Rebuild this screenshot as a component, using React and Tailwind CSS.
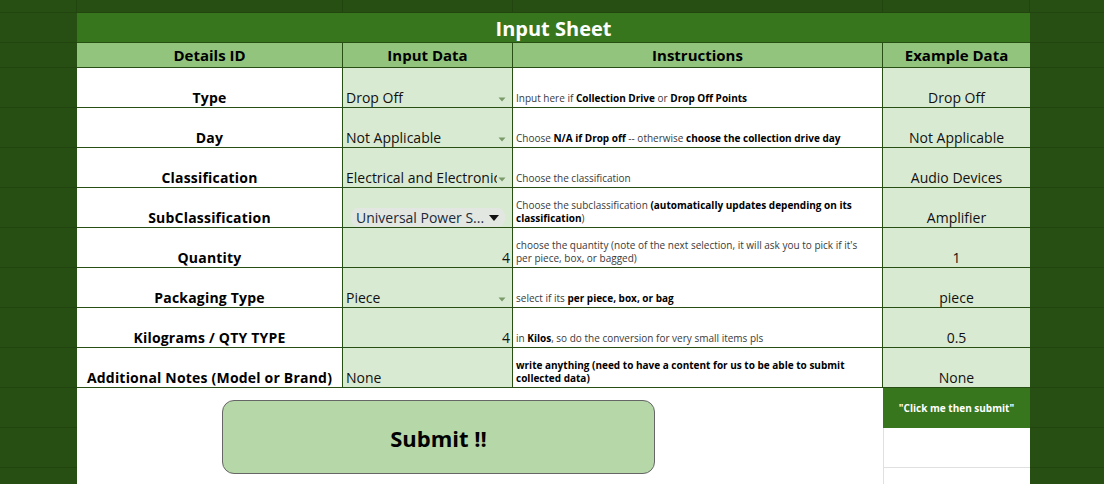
import React from 'react'

const rows = [
  {
    id: 'Type',
    input: 'Drop Off',
    arrow: true,
    example: 'Drop Off',
    note: (
      <>
        Input here if <b>Collection Drive</b> or <b>Drop Off Points</b>
      </>
    ),
  },
  {
    id: 'Day',
    input: 'Not Applicable',
    arrow: true,
    example: 'Not Applicable',
    note: (
      <>
        Choose <b>N/A if Drop off</b> -- otherwise <b>choose the collection drive day</b>
      </>
    ),
  },
  {
    id: 'Classification',
    input: 'Electrical and Electronics',
    arrow: true,
    example: 'Audio Devices',
    note: <>Choose the classification</>,
  },
  {
    id: 'SubClassification',
    chip: 'Universal Power S...',
    example: 'Amplifier',
    note: (
      <>
        Choose the subclassification <b>(automatically updates depending on its classification</b>)
      </>
    ),
  },
  {
    id: 'Quantity',
    number: '4',
    example: '1',
    note: (
      <>
        choose the quantity (note of the next selection, it will ask you to pick if it's per piece, box, or bagged)
      </>
    ),
  },
  {
    id: 'Packaging Type',
    input: 'Piece',
    arrow: true,
    example: 'piece',
    note: (
      <>
        select if its <b>per piece, box, or bag</b>
      </>
    ),
  },
  {
    id: 'Kilograms / QTY TYPE',
    number: '4',
    example: '0.5',
    note: (
      <>
        in <b>Kilos</b>, so do the conversion for very small items pls
      </>
    ),
  },
  {
    id: 'Additional Notes (Model or Brand)',
    input: 'None',
    example: 'None',
    note: <b>write anything (need to have a content for us to be able to submit collected data)</b>,
  },
]

function Arrow() {
  return (
    <svg width="8" height="5" viewBox="0 0 8 5" className="shrink-0">
      <path d="M0.5 0.5 L7.5 0.5 L4 4.5 Z" fill="#7a9a6a" />
    </svg>
  )
}

function Margin({ right }) {
  return (
    <div
      className={
        (right ? 'w-[74px]' : 'w-[77px]') +
        ' shrink-0 h-full border-b border-[#22450f]'
      }
    />
  )
}

function DataRow({ row }) {
  return (
    <div className="flex h-[40px]">
      <Margin />
      <div className="w-[266px] h-full bg-white border-b border-r border-[#274e13] flex items-end justify-center pb-0 text-[14px] font-bold text-black leading-[18px] tracking-[0.2px]">
        {row.id}
      </div>
      <div className="w-[170px] h-full bg-[#d9ead3] border-b border-r border-[#274e13] flex items-end pb-0 text-[14px] text-[#111] leading-[18px]">
        {row.chip ? (
          <div className="ml-[8px] w-[154px] h-[19px] rounded-[8px] bg-[#e3e7e1] flex items-center justify-between pl-[5px] pr-[6px] text-[#1a2a3a]">
            <span className="whitespace-nowrap">{row.chip}</span>
            <svg width="10" height="6" viewBox="0 0 10 6">
              <path d="M0 0 L10 0 L5 6 Z" fill="#111" />
            </svg>
          </div>
        ) : row.number ? (
          <div className="w-full text-right pr-[2px]">{row.number}</div>
        ) : (
          <div className="w-full flex items-center pl-[3px] pr-[6px]">
            <span className="whitespace-nowrap overflow-hidden w-[151px] shrink-0">{row.input}</span>
            {row.arrow && (
              <span className="ml-auto mb-[-2px]">
                <Arrow />
              </span>
            )}
          </div>
        )}
      </div>
      <div className="w-[370px] h-full bg-white border-b border-r border-[#274e13] flex items-end pb-[2px] pl-[3px] pr-[14px] text-[10px] leading-[13px] text-[#3a3a3a] [&_b]:text-black">
        <div>{row.note}</div>
      </div>
      <div className="w-[147px] h-full bg-[#d9ead3] border-b border-[#274e13] flex items-end justify-center pb-0 text-[14px] text-[#111] leading-[18px]">
        {row.example}
      </div>
      <Margin right />
    </div>
  )
}

export default function App() {
  return (
    <div className="w-[1104px] h-[484px] overflow-hidden bg-[#274e13] font-['Open_Sans','Liberation_Sans',sans-serif]">
      {/* top strip */}
      <div className="flex h-[13px]">
        <div className="w-[77px] h-full border-b border-r border-[#22450f]" />
        <div className="w-[266px] h-full border-b border-r border-[#22450f]" />
        <div className="w-[170px] h-full border-b border-r border-[#22450f]" />
        <div className="w-[370px] h-full border-b border-r border-[#22450f]" />
        <div className="w-[147px] h-full border-b border-r border-[#22450f]" />
        <div className="w-[74px] h-full border-b border-[#22450f]" />
      </div>

      {/* title */}
      <div className="flex h-[30px]">
        <Margin />
        <div className="w-[953px] h-full bg-[#38761d] border-b border-[#274e13] flex items-center justify-center pt-[2px] text-white font-bold text-[20px]">
          Input Sheet
        </div>
        <Margin right />
      </div>

      {/* header */}
      <div className="flex h-[25px]">
        <Margin />
        <div className="w-[266px] h-full bg-[#93c47d] border-b border-r border-[#274e13] flex items-center justify-center font-bold text-[15px] text-black">
          Details ID
        </div>
        <div className="w-[170px] h-full bg-[#93c47d] border-b border-r border-[#274e13] flex items-center justify-center font-bold text-[15px] text-black">
          Input Data
        </div>
        <div className="w-[370px] h-full bg-[#93c47d] border-b border-r border-[#274e13] flex items-center justify-center font-bold text-[15px] text-black">
          Instructions
        </div>
        <div className="w-[147px] h-full bg-[#93c47d] border-b border-[#274e13] flex items-center justify-center font-bold text-[15px] text-black">
          Example Data
        </div>
        <Margin right />
      </div>

      {rows.map((row) => (
        <DataRow key={row.id} row={row} />
      ))}

      {/* bottom */}
      <div className="flex h-[96px]">
        <div className="w-[77px] shrink-0 flex flex-col">
          <div className="h-[40px] border-b border-[#22450f]" />
          <div className="h-[40px] border-b border-[#22450f]" />
        </div>
        <div className="w-[806px] h-full bg-white pt-[12px] pl-[145px]">
          <button className="w-[433px] h-[74px] rounded-[12px] border border-[#666] bg-[#b6d7a8] flex items-center justify-center pt-[2px] font-bold text-[22px] text-black">
            Submit !!
          </button>
        </div>
        <div className="w-[147px] h-full flex flex-col">
          <div className="h-[40px] bg-[#38761d] flex items-center justify-center text-white font-bold text-[10px]">
            "Click me then submit"
          </div>
          <div className="h-[40px] bg-white border-b border-l border-[#e0e0e0]" />
          <div className="h-[16px] bg-white border-l border-[#e0e0e0]" />
        </div>
        <div className="w-[74px] shrink-0 flex flex-col">
          <div className="h-[40px] border-b border-[#22450f]" />
          <div className="h-[40px] border-b border-[#22450f]" />
        </div>
      </div>
    </div>
  )
}
